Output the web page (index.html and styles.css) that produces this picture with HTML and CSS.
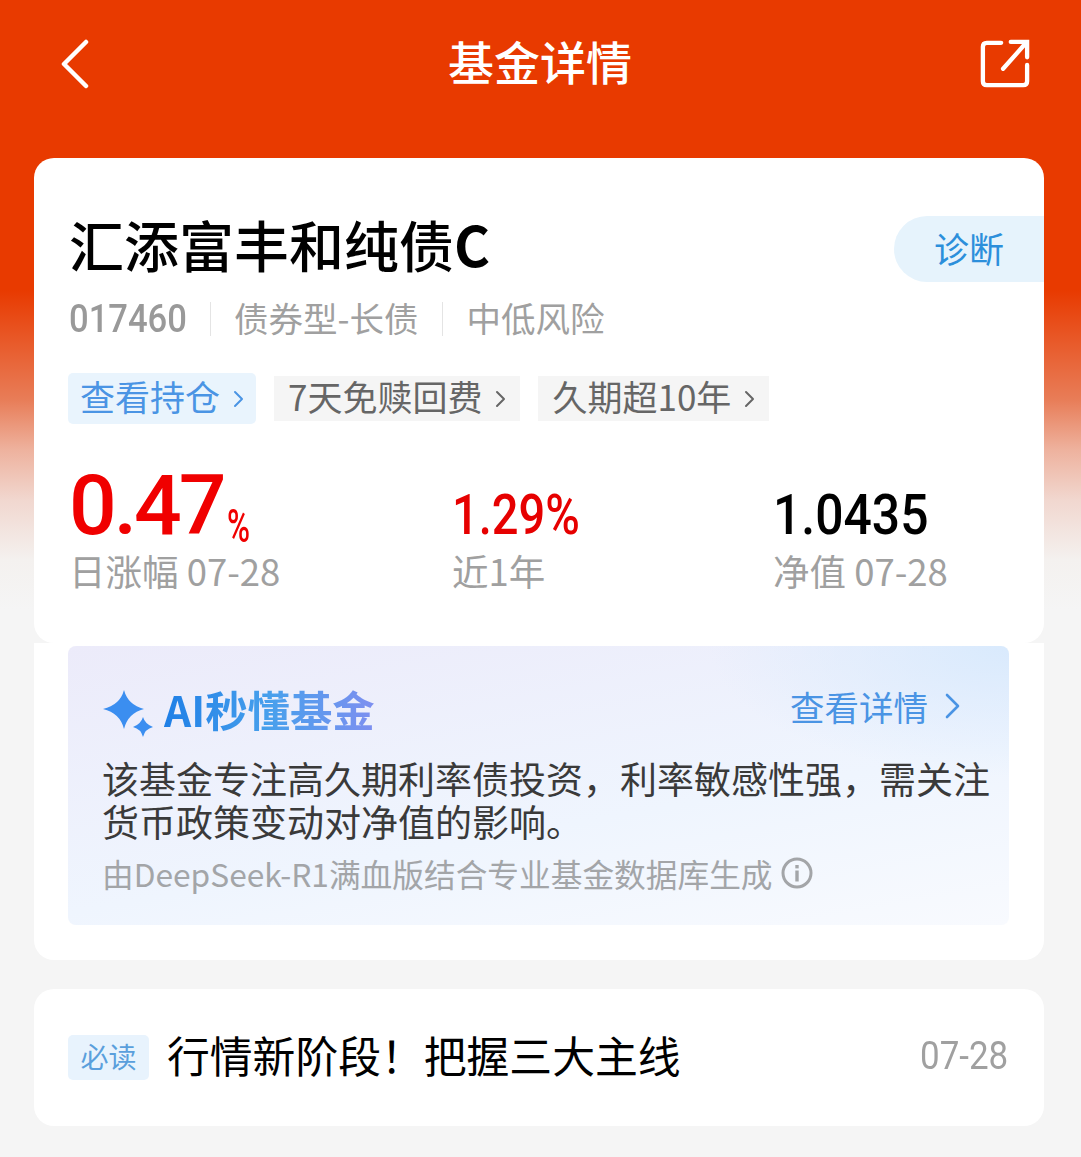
FILE: index.html
```html
<!DOCTYPE html>
<html>
  <head>
    <meta charset="utf-8">
    <title>基金详情</title>
    <link rel="stylesheet" href="styles.css">
  </head>
  <body>
    <div class="conteneur">
      <div class="entete">
        <svg class="retour" width="28" height="50" viewBox="0 0 28 50">
          <path d="M25 3 L3 25 L25 47" fill="none" stroke="#fff" stroke-width="4.5" stroke-linecap="round" stroke-linejoin="round"/>
        </svg>
        <div class="titre-page">基金详情</div>
        <svg class="partage" width="50" height="50" viewBox="0 0 52 52">
          <path d="M22 4 H7 Q3 4 3 8 V44 Q3 48 7 48 H45 Q49 48 49 44 V27" fill="none" stroke="#fff" stroke-width="4.5" stroke-linecap="round"/>
          <path d="M24 31 L47 5 M32 3 H49 V19" fill="none" stroke="#fff" stroke-width="4.5" stroke-linecap="round"/>
        </svg>
      </div>

      <div class="carte carte-fonds">
        <div class="diagnostic">诊断</div>
        <h1 class="nom-fonds">汇添富丰和纯债<b>C</b></h1>
        <div class="infos">
          <span class="code"><span class="etroit">017460</span></span>
          <span class="info">债券型-长债</span>
          <span class="info">中低风险</span>
        </div>
        <div class="tags">
          <span class="tag tag-bleu">查看持仓<svg class="fleche" width="11" height="20" viewBox="0 0 11 20"><path d="M2 3 L9 10 L2 17" fill="none" stroke="currentColor" stroke-width="2" stroke-linecap="round" stroke-linejoin="round"/></svg></span>
          <span class="tag">7天免赎回费<svg class="fleche" width="11" height="20" viewBox="0 0 11 20"><path d="M2 3 L9 10 L2 17" fill="none" stroke="currentColor" stroke-width="2" stroke-linecap="round" stroke-linejoin="round"/></svg></span>
          <span class="tag">久期超10年<svg class="fleche" width="11" height="20" viewBox="0 0 11 20"><path d="M2 3 L9 10 L2 17" fill="none" stroke="currentColor" stroke-width="2" stroke-linecap="round" stroke-linejoin="round"/></svg></span>
        </div>
        <div class="chiffres">
          <div class="chiffre c1">
            <div class="valeur grand rouge">0.47<span class="pct">%</span></div>
            <div class="legende">日涨幅 07-28</div>
          </div>
          <div class="chiffre c2">
            <div class="valeur rouge"><span class="serre-a">1.29%</span></div>
            <div class="legende">近1年</div>
          </div>
          <div class="chiffre c3">
            <div class="valeur"><span class="serre-b">1.0435</span></div>
            <div class="legende">净值 07-28</div>
          </div>
        </div>
      </div>

      <div class="carte carte-ai">
        <div class="bloc-ai">
          <div class="ai-haut">
            <div class="ai-titre">
              <svg class="etoile" width="52" height="50" viewBox="0 0 52 50">
                <path d="M22 2 Q26 17 42 21 Q26 25 22 41 Q18 25 1 21 Q18 17 22 2 Z" fill="#3b8ef0"/>
                <path d="M41 29 Q43 36 51 39 Q43 41 41 49 Q39 41 31 39 Q39 36 41 29 Z" fill="#3b8ef0"/>
              </svg>
              <span class="ai-texte">AI秒懂基金</span>
            </div>
            <div class="ai-lien">查看详情<svg width="18" height="28" viewBox="0 0 18 28"><path d="M3 3 L14 14 L3 25" fill="none" stroke="#4a94e4" stroke-width="2.6" stroke-linecap="round" stroke-linejoin="round"/></svg></div>
          </div>
          <p class="ai-resume">该基金专注高久期利率债投资，利率敏感性强，需关注<br>货币政策变动对净值的影响。</p>
          <div class="ai-source">由DeepSeek-R1满血版结合专业基金数据库生成
            <svg width="32" height="32" viewBox="0 0 32 32">
              <circle cx="16" cy="16" r="14" fill="none" stroke="#a3a5a8" stroke-width="3"/>
              <rect x="14.3" y="13.5" width="3.4" height="11" fill="#a3a5a8"/>
              <rect x="14.3" y="8" width="3.4" height="3.4" fill="#a3a5a8"/>
            </svg>
          </div>
        </div>
      </div>

      <div class="carte carte-news">
        <span class="badge">必读</span>
        <span class="news-titre">行情新阶段！把握三大主线</span>
        <span class="news-date"><span class="etroit-date">07-28</span></span>
      </div>
    </div>
  </body>
</html>
```

FILE: styles.css
```css
html, body, div, h1, p{
  margin:0px;
  padding:0px;
}
body{
  font-family:"Noto Sans CJK SC", "Noto Sans", sans-serif;
  background-color:#f5f5f5;
}
.conteneur{
  height:1157px;
  overflow:hidden;
  padding:0px 37px 0px 34px;
  background:linear-gradient(#e83a00 0px, #e83a00 290px, #e87d58 400px, #eeb29e 450px, #f1d7cf 500px, #f4f1ef 560px, #f5f5f5 610px);
}
.entete{
  height:158px;
  margin:0px -1px 0px 0px;
  display:grid;
  grid-template-columns:387px auto 1fr;
  align-items:start;
  padding:38px 15px 0px 27px;
  box-sizing:border-box;
}
.retour{
  margin-top:1px;
}
.titre-page{
  margin-top:-8px;
  color:#fff;
  font-size:46px;
  line-height:60px;
  font-weight:500;
}
.partage{
  justify-self:end;
  margin-top:1px;
}
.carte{
  background-color:#fff;
  width:1010px;
}
.carte-fonds{
  position:relative;
  height:485px;
  border-radius:20px;
  box-sizing:border-box;
  padding:46px 0px 0px 35px;
}
.diagnostic{
  position:absolute;
  top:58px;
  right:0px;
  width:150px;
  height:66px;
  line-height:63px;
  padding-left:40px;
  box-sizing:border-box;
  border-radius:33px 0px 0px 33px;
  background-color:#e6f3fc;
  color:#2c8fdb;
  font-size:35px;
}
.nom-fonds{
  font-size:55px;
  line-height:78px;
  font-weight:500;
  color:#000;
}
.nom-fonds b{
  font-weight:700;
}
.infos{
  display:flex;
  align-items:center;
  height:40px;
  margin-top:17px;
  color:#a0a0a0;
  font-size:34.5px;
}
.code{
  width:117px;
  font-family:"Roboto", sans-serif;
  font-weight:500;
  font-size:38px;
  color:#999;
}
.etroit{
  display:inline-block;
  transform:scaleX(0.91);
  transform-origin:left;
}
.info{
  border-left:1px solid #e4e4e4;
  margin-left:24px;
  padding-left:23px;
  height:34px;
  line-height:31px;
}
.tags{
  display:flex;
  align-items:center;
  gap:18px;
  margin:34px 0px 0px -1px;
}
.tag{
  display:flex;
  align-items:center;
  gap:13px;
  height:45px;
  box-sizing:border-box;
  line-height:40px;
  padding:0px 14px 6px 14px;
  background-color:#f5f5f5;
  color:#666;
  font-size:35px;
}
.fleche{
  margin-bottom:-6px;
}
.tag-bleu{
  height:51px;
  border-radius:5px;
  padding:0px 12px 6px 12px;
  background-color:#e9f4fd;
  color:#4a94e4;
}
.chiffres{
  display:flex;
  margin-top:40px;
  align-items:flex-end;
}
.chiffre{
  flex:none;
}
.c1{
  width:383px;
}
.c2{
  width:321px;
}
.valeur{
  font-family:"Roboto", sans-serif;
  font-weight:500;
  font-size:56px;
  line-height:66px;
  color:#000;
  white-space:nowrap;
}
.serre-a, .serre-b{
  display:inline-block;
  transform-origin:left;
}
.serre-a{
  transform:scaleX(0.84);
}
.serre-b{
  transform:scaleX(0.89);
}
.rouge{
  color:#e60000;
}
.grand{
  font-size:84px;
  line-height:84px;
  color:#f00000;
  letter-spacing:-3px;
}
.pct{
  display:inline-block;
  width:24px;
  font-size:46px;
  font-weight:500;
  margin-left:3px;
  letter-spacing:0px;
  vertical-align:-8px;
  line-height:40px;
  transform:scaleX(0.68);
  transform-origin:left;
}
.legende{
  margin-top:0px;
  font-size:36.5px;
  line-height:46px;
  color:#a0a0a0;
}
.carte-ai{
  height:317px;
  border-radius:0px 0px 20px 20px;
  padding:3px 35px 0px 34px;
  box-sizing:border-box;
}
.bloc-ai{
  height:279px;
  border-radius:8px;
  padding:35px 0px 0px 34px;
  box-sizing:border-box;
  background:radial-gradient(ellipse 300px 130px at 100% 0%, #d9eafd, rgba(217,234,253,0)), linear-gradient(170deg, #ecebfa 0%, #eff5fe 60%, #f8fafe 100%);
}
.ai-haut{
  display:flex;
  justify-content:space-between;
  align-items:flex-start;
  padding-right:47px;
}
.ai-titre{
  display:flex;
  align-items:center;
  gap:10px;
  height:54px;
}
.etoile{
  margin-top:10px;
}
.ai-texte{
  font-size:42.4px;
  font-weight:700;
  color:#3a8fe8;
  background:linear-gradient(90deg, #1f7fe6, #48a0ec 50%, #7e8ff0);
  -webkit-background-clip:text;
  background-clip:text;
  -webkit-text-fill-color:transparent;
}
.ai-lien{
  display:flex;
  align-items:center;
  gap:16px;
  height:50px;
  color:#4a94e4;
  font-size:34.5px;
}
.ai-resume{
  margin-top:22px;
  font-size:37px;
  line-height:43px;
  color:#3a3a3a;
  white-space:nowrap;
}
.ai-source{
  display:flex;
  align-items:center;
  gap:8px;
  margin-top:8px;
  height:44px;
  font-size:31.7px;
  color:#a3a5a8;
}
.carte-news{
  display:flex;
  align-items:center;
  height:137px;
  margin-top:29px;
  border-radius:20px;
  padding:0px 36px 0px 34px;
  box-sizing:border-box;
}
.badge{
  width:81px;
  height:45px;
  line-height:42px;
  text-align:center;
  border-radius:5px;
  background-color:#e8f3fd;
  color:#5a9fdc;
  font-size:28px;
}
.news-titre{
  flex:1;
  margin-left:18px;
  padding-bottom:8px;
  font-size:42.8px;
  color:#000;
}
.news-date{
  width:88px;
  white-space:nowrap;
  font-family:"Roboto", sans-serif;
  font-size:38px;
  color:#a0a0a0;
  padding-bottom:4px;
}
.etroit-date{
  display:inline-block;
  transform:scaleX(0.92);
  transform-origin:left;
}
```
